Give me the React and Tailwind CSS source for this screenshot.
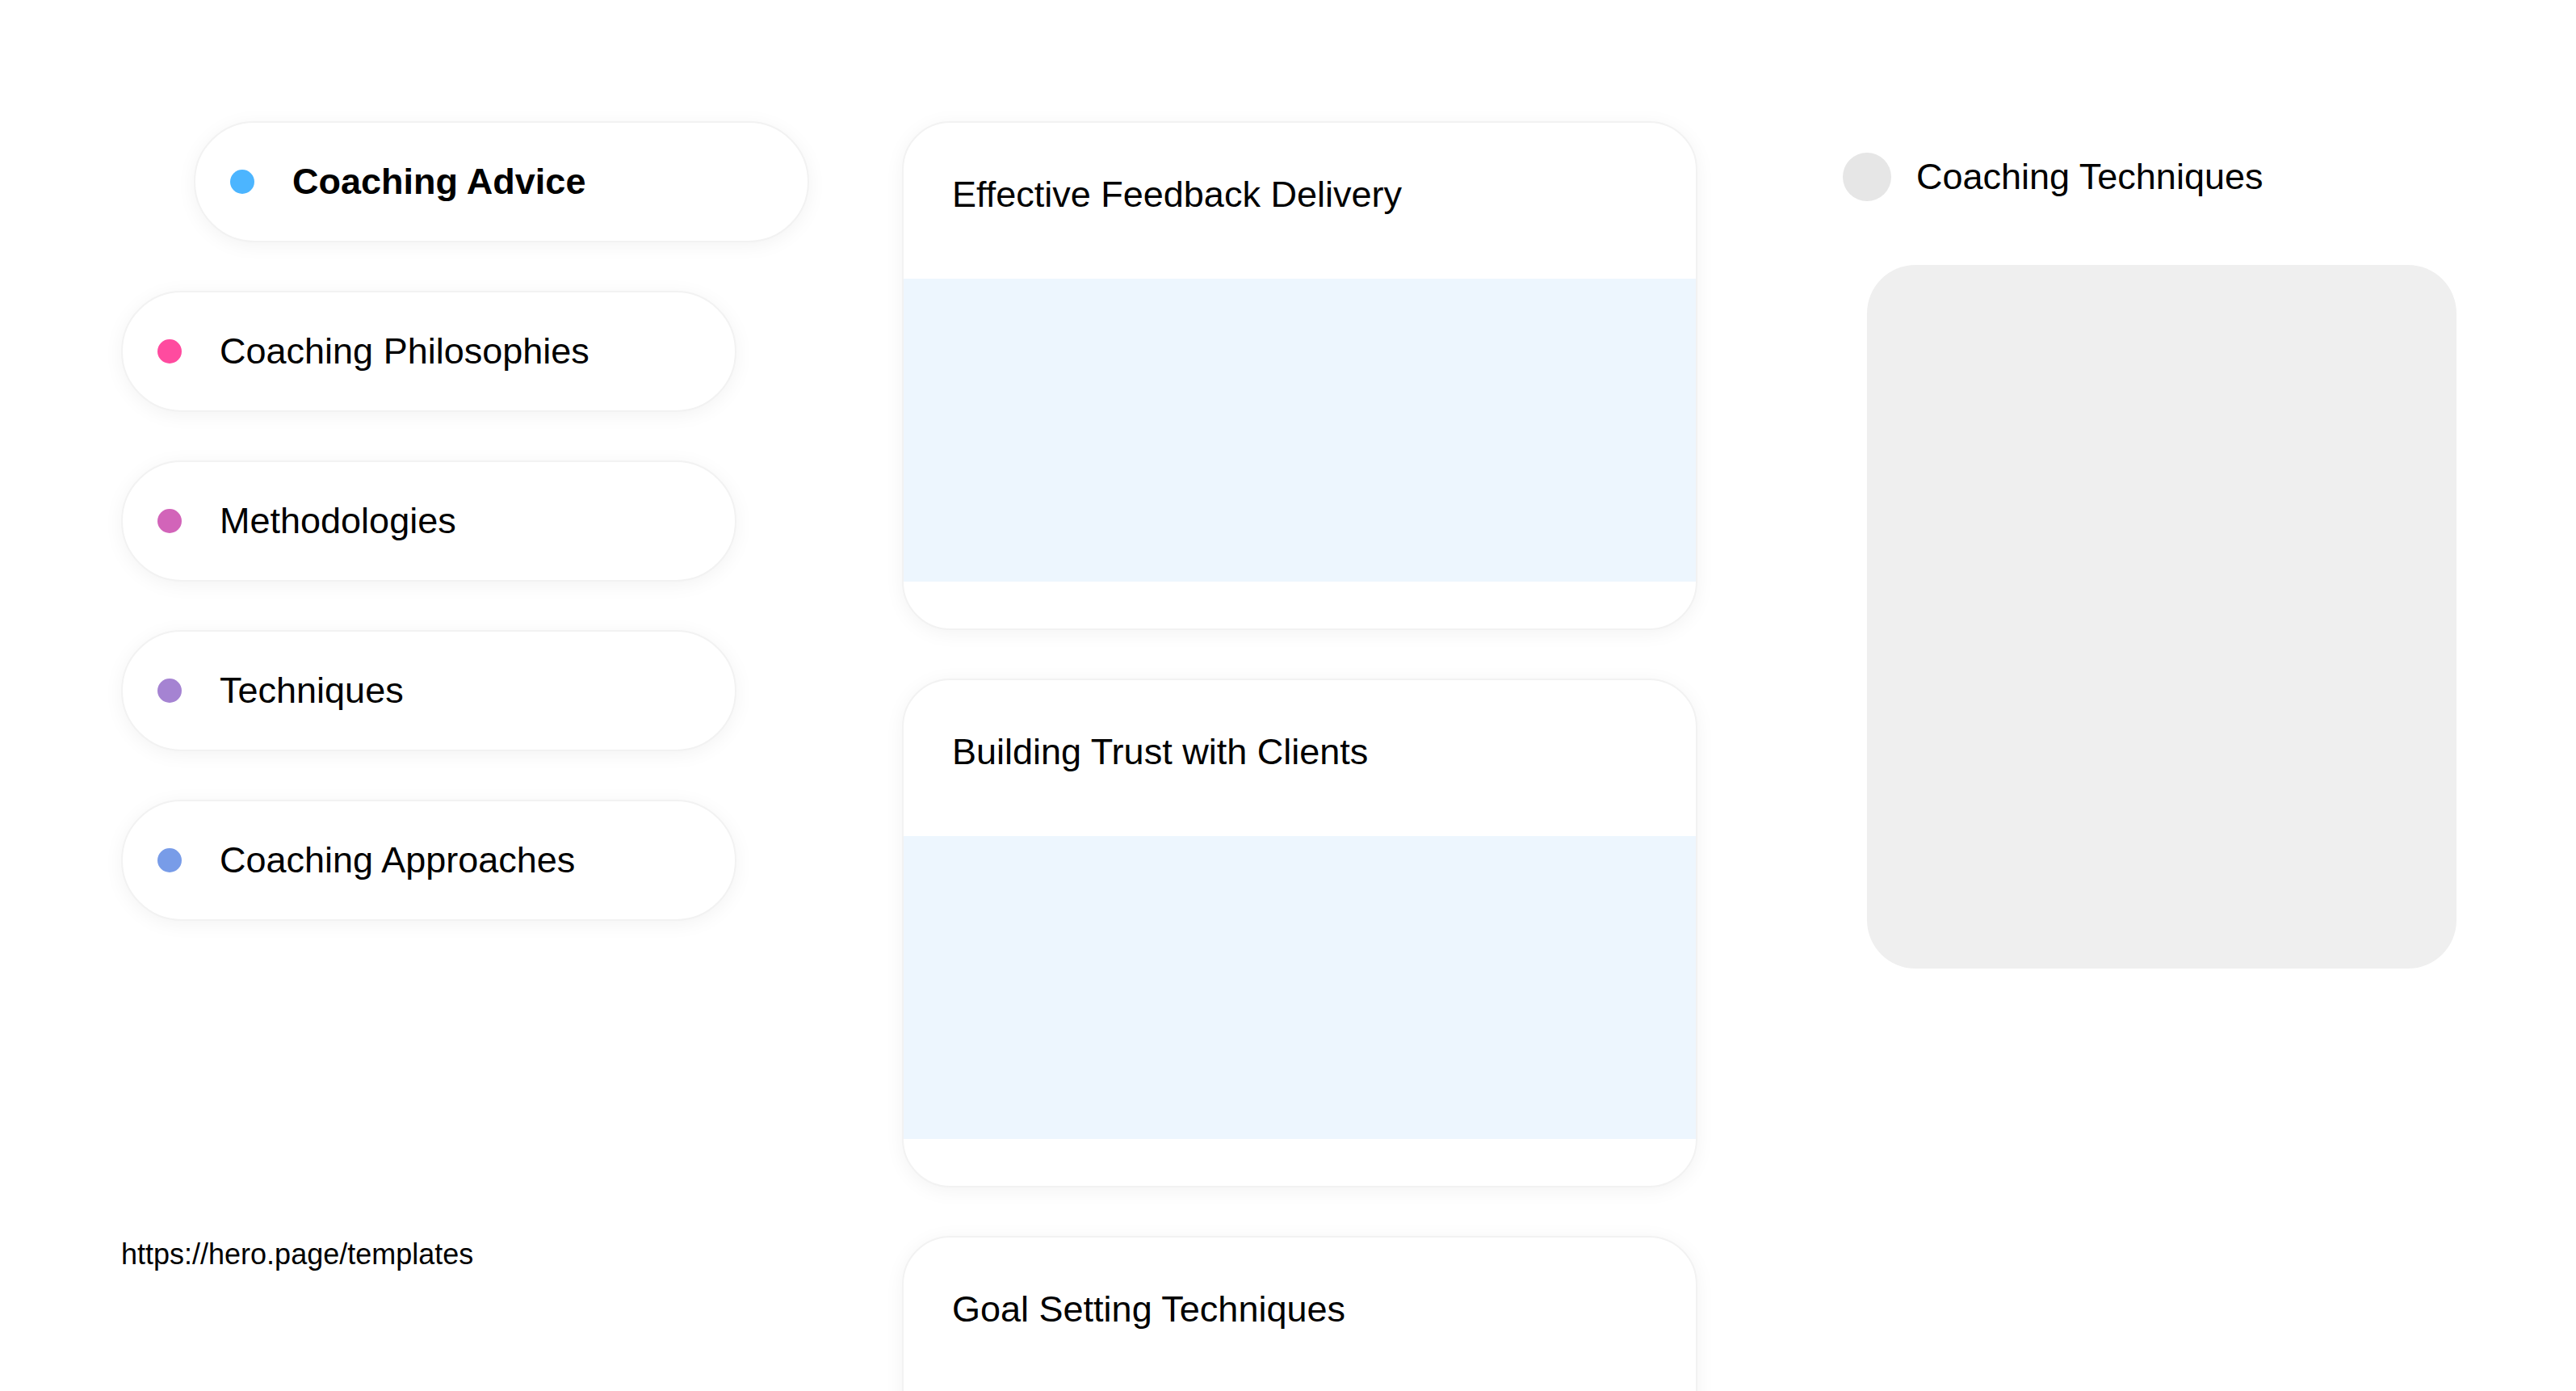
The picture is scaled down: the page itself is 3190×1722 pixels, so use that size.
import React from 'react';

const topics = [
  { label: 'Coaching Philosophies', dot: 'bg-[#ff4b9f]' },
  { label: 'Methodologies', dot: 'bg-[#d264b9]' },
  { label: 'Techniques', dot: 'bg-[#a583d2]' },
  { label: 'Coaching Approaches', dot: 'bg-[#789ce8]' },
];

const cards = ['Effective Feedback Delivery', 'Building Trust with Clients', 'Goal Setting Techniques'];

function Pill({ label, dot, bold, className = '' }) {
  return (
    <div
      className={`flex items-center w-[762px] h-[150px] rounded-full bg-white border-2 border-[#f2f2f2] shadow-[0_4px_24px_rgba(0,0,0,0.05)] pl-[43px] ${className}`}
    >
      <span className={`w-[30px] h-[30px] rounded-full shrink-0 ${dot}`} />
      <span className={`ml-[47px] text-[45px] text-black ${bold ? 'font-bold' : 'font-normal'}`}>{label}</span>
    </div>
  );
}

function Card({ title }) {
  return (
    <div className="w-[985px] h-[630px] shrink-0 rounded-[60px] bg-white border-2 border-[#f2f2f2] shadow-[0_4px_24px_rgba(0,0,0,0.05)] overflow-hidden flex flex-col">
      <div className="h-[193px] pt-[55px] pl-[60px] text-[45px] text-black">{title}</div>
      <div className="h-[375px] bg-[#edf6fe]" />
    </div>
  );
}

export default function App() {
  return (
    <div
      className="w-[3190px] h-[1722px] overflow-hidden bg-white flex pl-[150px] pt-[150px]"
      style={{ fontFamily: '"Liberation Sans", Arial, sans-serif' }}
    >
      {/* Left column: topic pills */}
      <div className="w-[852px] shrink-0 flex flex-col">
        <Pill label="Coaching Advice" dot="bg-[#4cb5ff]" bold className="ml-[90px]" />
        <div className="flex flex-col gap-[60px] mt-[60px]">
          {topics.map((t) => (
            <Pill key={t.label} label={t.label} dot={t.dot} />
          ))}
        </div>
        <p className="mt-[392px] text-[36px] text-black leading-[41px]">https://hero.page/templates</p>
      </div>

      {/* Middle column: cards */}
      <div className="ml-[115px] flex flex-col gap-[60px]">
        {cards.map((c) => (
          <Card key={c} title={c} />
        ))}
      </div>

      {/* Right column */}
      <div className="ml-[180px] w-[760px] shrink-0 flex flex-col">
        <div className="flex items-center mt-[35px]">
          <span className="w-[60px] h-[60px] rounded-full bg-[#e6e6e6] shrink-0" />
          <span className="ml-[31px] text-[45px] text-black">Coaching Techniques</span>
        </div>
        <div className="ml-[30px] mt-[75px] w-[730px] h-[871px] rounded-[60px] bg-[#efefef]" />
      </div>
    </div>
  );
}
